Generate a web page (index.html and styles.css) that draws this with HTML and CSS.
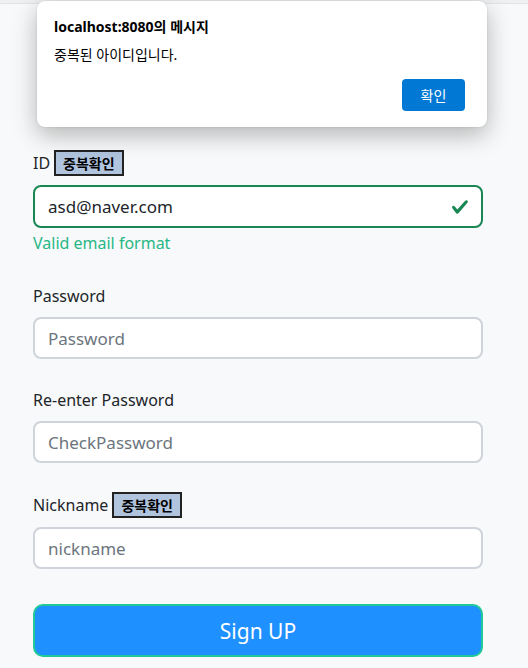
FILE: index.html
```html
<!DOCTYPE html>
<html lang="ko">
<head>
<meta charset="utf-8">
<title>Sign up</title>
<link rel="stylesheet" href="styles.css">
</head>
<body>
<div class="topbar"></div>

<div class="dialog" role="alertdialog">
  <div class="dialog-title">localhost:8080의 메시지</div>
  <div class="dialog-msg">중복된 아이디입니다.</div>
  <div class="dialog-actions"><button class="dialog-btn" type="button">확인</button></div>
</div>

<form class="signup">
  <div class="group group-id">
    <div class="label-row"><label class="label">ID</label><button class="dup-btn" type="button">중복확인</button></div>
    <div class="field valid">
      <input class="field-input" type="text" value="asd@naver.com">
      <svg class="check" viewBox="0 0 8 8" width="18" height="18"><path fill="#198754" d="M2.3 6.73.6 4.53c-.4-1.04.46-1.4 1.1-.8l1.1 1.4 3.4-3.8c.6-.63 1.6-.27 1.2.7l-4 4.6c-.43.5-.8.4-1.1.1z"/></svg>
    </div>
    <div class="feedback">Valid email format</div>
  </div>

  <div class="group">
    <div class="label-row plain"><label class="label">Password</label></div>
    <div class="field"><input class="field-input" type="password" placeholder="Password"></div>
  </div>

  <div class="group">
    <div class="label-row plain"><label class="label">Re-enter Password</label></div>
    <div class="field"><input class="field-input" type="password" placeholder="CheckPassword"></div>
  </div>

  <div class="group">
    <div class="label-row"><label class="label">Nickname</label><button class="dup-btn" type="button">중복확인</button></div>
    <div class="field"><input class="field-input" type="text" placeholder="nickname"></div>
  </div>

  <button class="submit" type="button">Sign UP</button>
</form>
</body>
</html>
```
FILE: styles.css
```css
* { box-sizing: border-box; }
html, body {
  margin: 0;
  padding: 0;
  background: #f8f9fa;
  font-family: "Noto Sans", "Noto Sans CJK KR", sans-serif;
  color: #212529;
}
body { height: 668px; overflow: hidden; position: relative; }

.topbar {
  height: 4px;
  background: #eef0f2;
  border-bottom: 1px solid #e2e4e6;
}

.dialog {
  position: absolute;
  left: 37px;
  top: 1px;
  width: 450px;
  height: 126px;
  background: #fff;
  border-radius: 8px;
  box-shadow: 0 8px 24px rgba(0,0,0,0.28), 0 0 2px rgba(0,0,0,0.15);
  padding: 16px 17px 0 17px;
  z-index: 5;
}
.dialog-title {
  font-family: "Noto Sans", "Noto Sans CJK KR", sans-serif;
  font-weight: 700;
  font-size: 14px;
  line-height: 20px;
  color: #000;
}
.dialog-msg {
  margin-top: 8px;
  font-family: "Noto Sans", "Noto Sans CJK KR", sans-serif;
  font-size: 14px;
  line-height: 20px;
  color: #000;
}
.dialog-actions {
  display: flex;
  justify-content: flex-end;
  margin-top: 14px;
  padding-right: 5px;
}
.dialog-btn {
  width: 63px;
  height: 32px;
  border: none;
  border-radius: 4px;
  background: #0078d4;
  color: #fff;
  font-family: "Noto Sans CJK KR", sans-serif;
  font-size: 14px;
}

.signup {
  width: 450px;
  margin-left: 33px;
  padding-top: 146px;
  display: flex;
  flex-direction: column;
}
.group { margin-bottom: 29px; }
.label-row {
  display: flex;
  align-items: center;
  gap: 4px;
  height: 26px;
  margin-bottom: 9px;
}
.label-row.plain { height: 24px; }
.label {
  font-size: 16px;
  line-height: 24px;
}
.dup-btn {
  height: 26px;
  padding: 0 7px;
  background: #b0c4de;
  border: 2px solid #222;
  border-radius: 0;
  font-family: "Noto Sans CJK KR", sans-serif;
  font-weight: 700;
  font-size: 14px;
  color: #000;
}

.field {
  display: flex;
  align-items: center;
  height: 42px;
  background: #fff;
  border: 2px solid #ced4da;
  border-radius: 8px;
  padding: 0 12px 0 13px;
}
.field.valid { border-color: #198754; height: 43px; }
.field-input {
  flex: 1;
  min-width: 0;
  border: none;
  outline: none;
  background: transparent;
  padding: 0;
  font-family: "Noto Sans", sans-serif;
  font-size: 17px;
  color: #212529;
}
.field-input::placeholder { color: #6c757d; }
.check { flex: none; }

.feedback {
  margin-top: 3px;
  font-size: 16px;
  line-height: 24px;
  color: #27b786;
}

.submit {
  margin-top: 6px;
  height: 53px;
  width: 100%;
  background: #1e90ff;
  border: 2px solid #20c997;
  border-radius: 10px;
  color: #fff;
  font-family: "Noto Sans", sans-serif;
  font-size: 21px;
}
```
